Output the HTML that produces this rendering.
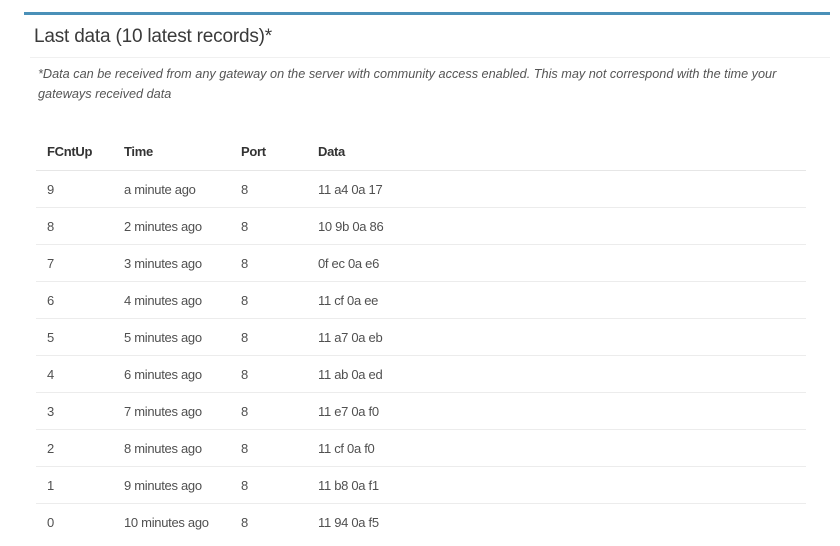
<!DOCTYPE html>
<html><head><style>
body{margin:0;width:840px;height:546px;background:#fff;position:relative;overflow:hidden;font-family:"Liberation Sans",sans-serif;color:#444}
.a{position:absolute;white-space:nowrap}
.ln{position:absolute;height:1px;background:#ececec;left:36px;width:770px}
.c{position:absolute;font-size:13px;color:#505050;white-space:nowrap;letter-spacing:-0.3px}
.h{font-weight:bold;color:#333}
</style></head><body>
<div class="a" style="left:24px;top:12px;width:806px;height:3px;background:#4a90b8"></div>
<div class="a" style="left:34px;top:26px;font-size:19px;color:#3a3a3a;letter-spacing:-0.2px">Last data (10 latest records)*</div>
<div class="a" style="left:30px;top:57px;width:800px;height:1px;background:#f0f0f0"></div>
<div class="a" style="left:38px;top:64px;font-size:12.7px;font-style:italic;color:#555;line-height:20px;letter-spacing:0">*Data can be received from any gateway on the server with community access enabled. This may not correspond with the time your<br>gateways received data</div>
<div class="c h" style="left:47px;top:144px">FCntUp</div>
<div class="c h" style="left:124px;top:144px">Time</div>
<div class="c h" style="left:241px;top:144px">Port</div>
<div class="c h" style="left:318px;top:144px">Data</div>
<div class="ln" style="top:170px;background:#e6e6e6"></div>
<div class="c" style="left:47px;top:182px">9</div><div class="c" style="left:124px;top:182px">a minute ago</div><div class="c" style="left:241px;top:182px">8</div><div class="c" style="left:318px;top:182px">11 a4 0a 17</div><div class="ln" style="top:207px"></div>
<div class="c" style="left:47px;top:219px">8</div><div class="c" style="left:124px;top:219px">2 minutes ago</div><div class="c" style="left:241px;top:219px">8</div><div class="c" style="left:318px;top:219px">10 9b 0a 86</div><div class="ln" style="top:244px"></div>
<div class="c" style="left:47px;top:256px">7</div><div class="c" style="left:124px;top:256px">3 minutes ago</div><div class="c" style="left:241px;top:256px">8</div><div class="c" style="left:318px;top:256px">0f ec 0a e6</div><div class="ln" style="top:281px"></div>
<div class="c" style="left:47px;top:293px">6</div><div class="c" style="left:124px;top:293px">4 minutes ago</div><div class="c" style="left:241px;top:293px">8</div><div class="c" style="left:318px;top:293px">11 cf 0a ee</div><div class="ln" style="top:318px"></div>
<div class="c" style="left:47px;top:330px">5</div><div class="c" style="left:124px;top:330px">5 minutes ago</div><div class="c" style="left:241px;top:330px">8</div><div class="c" style="left:318px;top:330px">11 a7 0a eb</div><div class="ln" style="top:355px"></div>
<div class="c" style="left:47px;top:367px">4</div><div class="c" style="left:124px;top:367px">6 minutes ago</div><div class="c" style="left:241px;top:367px">8</div><div class="c" style="left:318px;top:367px">11 ab 0a ed</div><div class="ln" style="top:392px"></div>
<div class="c" style="left:47px;top:404px">3</div><div class="c" style="left:124px;top:404px">7 minutes ago</div><div class="c" style="left:241px;top:404px">8</div><div class="c" style="left:318px;top:404px">11 e7 0a f0</div><div class="ln" style="top:429px"></div>
<div class="c" style="left:47px;top:441px">2</div><div class="c" style="left:124px;top:441px">8 minutes ago</div><div class="c" style="left:241px;top:441px">8</div><div class="c" style="left:318px;top:441px">11 cf 0a f0</div><div class="ln" style="top:466px"></div>
<div class="c" style="left:47px;top:478px">1</div><div class="c" style="left:124px;top:478px">9 minutes ago</div><div class="c" style="left:241px;top:478px">8</div><div class="c" style="left:318px;top:478px">11 b8 0a f1</div><div class="ln" style="top:503px"></div>
<div class="c" style="left:47px;top:515px">0</div><div class="c" style="left:124px;top:515px">10 minutes ago</div><div class="c" style="left:241px;top:515px">8</div><div class="c" style="left:318px;top:515px">11 94 0a f5</div>
</body></html>
